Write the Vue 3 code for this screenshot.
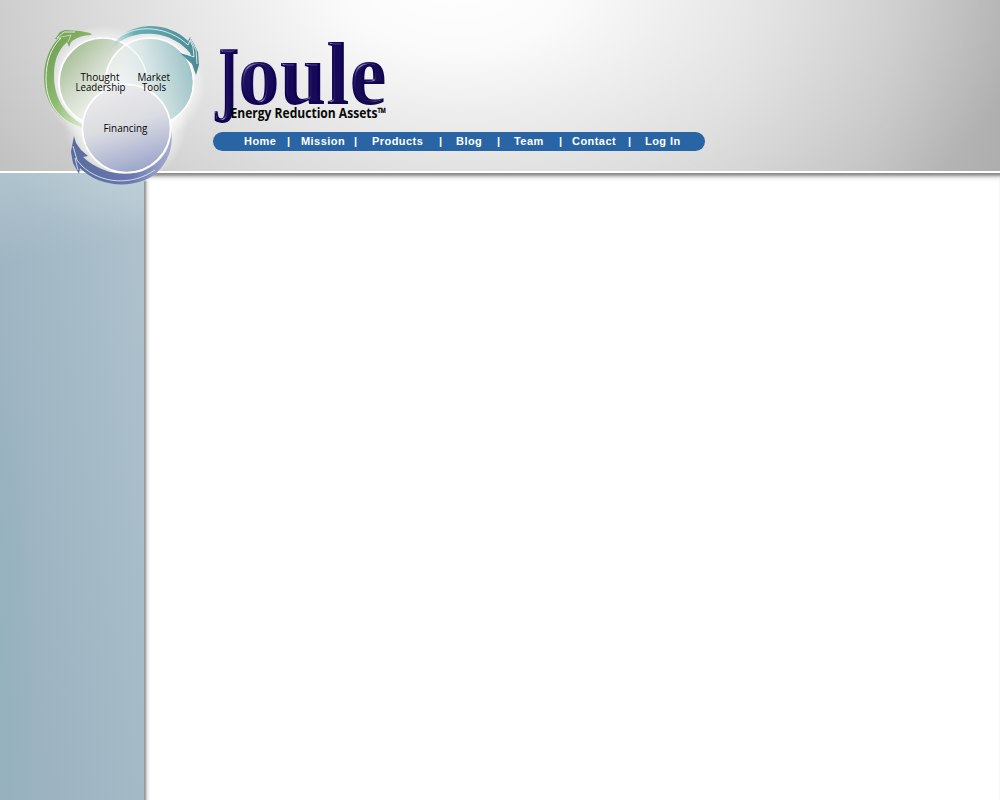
<script setup>
const links = ['Home', 'Mission', 'Products', 'Blog', 'Team', 'Contact', 'Log In']
</script>

<template>
  <div class="page">
    <header class="header">
      <svg class="emblem" width="205" height="195" viewBox="0 0 205 195">
        <defs>
          <radialGradient id="halo"><stop offset=".66" stop-color="#fff" stop-opacity=".8" /><stop offset="1" stop-color="#fff" stop-opacity="0" /></radialGradient>
          <linearGradient id="green" x1=".1" y1=".1" x2=".85" y2=".8"><stop offset="0" stop-color="#a3bd91" /><stop offset=".4" stop-color="#d3dccd" /><stop offset=".75" stop-color="#f5f7f4" /></linearGradient>
          <linearGradient id="teal" x1="1" y1=".35" x2="0" y2=".6"><stop offset="0" stop-color="#9bc3c7" /><stop offset=".5" stop-color="#dae6e6" /><stop offset="1" stop-color="#fafafa" stop-opacity=".45" /></linearGradient>
          <linearGradient id="blue" x1=".35" y1="0" x2=".65" y2="1"><stop offset="0" stop-color="#ebebec" /><stop offset=".45" stop-color="#dcdde2" /><stop offset="1" stop-color="#9aa4ca" /></linearGradient>
          <linearGradient id="greenArc" x1="0" y1="0" x2=".8" y2="1"><stop offset="0" stop-color="#66964b" /><stop offset=".55" stop-color="#8db870" /><stop offset="1" stop-color="#dcebd2" /></linearGradient>
          <linearGradient id="tealArc"><stop offset="0" stop-color="#b9dddf" stop-opacity=".2" /><stop offset=".3" stop-color="#68afb6" /><stop offset="1" stop-color="#4b8a93" /></linearGradient>
          <linearGradient id="blueArc"><stop offset="0" stop-color="#586b9e" /><stop offset=".6" stop-color="#6a78af" /><stop offset="1" stop-color="#a6afd2" /></linearGradient>
        </defs>
        <circle cx="103" cy="84" r="59" fill="url(#halo)" />
        <circle cx="149" cy="84" r="57" fill="url(#halo)" />
        <circle cx="126" cy="122" r="62" fill="url(#halo)" />

        <path d="M82 128 C59 122 44 103 44 78 C44 62 49 48 58 39 L55 39 L60 32 L65 30 L80 31 L90 33 L92 35 C82 35 76 38 71 42 L69 47 L67 42 C57 51 54 62 54 76 C54 97 64 114 82 124 Z" fill="url(#greenArc)" />
        <path d="M80 127 C59 121 46 103 46 79 C46 61 51 48 61 38 L57 38 L64 32 L75 32" fill="none" stroke="#f0f7ec" stroke-width=".9" />
        <path d="M61 37 L71 35 L68 42" fill="none" stroke="#dcead3" stroke-width=".7" />

        <circle cx="103" cy="82" r="44" fill="url(#green)" stroke="#fff" stroke-width="1.7" />
        <circle cx="149.5" cy="82" r="44" fill="url(#teal)" stroke="#fff" stroke-width="1.5" />
        <path d="M112 39 C128 43 144 56 146.500 76" fill="none" stroke="#fff" stroke-width="1.3" opacity=".8" />

        <path d="M107 54 C115 37 129 27 149 26 C166 26 179 32 188 41 L190 37 L194 44 L198 52 L199 65 L196 75 L192 64 L180 53 L191 56 L190 53 C182 43 168 35 154 34 C132 32 118 40 107 54 Z" fill="url(#tealArc)" />
        <path d="M118 38 C138 23 169 27 188 45 L190 40 L193 47 L194 57 L183 53 M190 38 L196 50 L197 64" fill="none" stroke="#e2f2f3" stroke-width=".9" />

        <path d="M74 136 L76 143 L81 150 L88 156 L83 157 C98 171 121 178 143 171 C160 164 171 150 171 131 C175 151 163 173 145 180 C122 189 96 184 80 168 L79 174 L73 163 L71 152 L72 146 Z" fill="url(#blueArc)" />
        <path d="M73 146 L77 160 L82 166 C101 184 132 186 155 170 M75 158 L78 170" fill="none" stroke="#dfe4f1" stroke-width=".9" />
        <circle cx="126.500" cy="128.500" r="44" fill="url(#blue)" stroke="#fff" stroke-width="1.500" />

        <g class="caption">
          <text x="80.500" y="81" textLength="39" lengthAdjust="spacingAndGlyphs">Thought</text>
          <text x="75.500" y="91" textLength="50" lengthAdjust="spacingAndGlyphs">Leadership</text>
          <text x="137.500" y="81" textLength="32.500" lengthAdjust="spacingAndGlyphs">Market</text>
          <text x="142" y="91" textLength="24" lengthAdjust="spacingAndGlyphs">Tools</text>
          <text x="103.500" y="132" textLength="44" lengthAdjust="spacingAndGlyphs">Financing</text>
        </g>
      </svg>

      <div class="brand">
        <svg class="wordmark" width="190" height="95" viewBox="205 35 190 95">
          <defs>
            <linearGradient id="navy" x1="0" y1="0" x2="1" y2="1"><stop offset="0" stop-color="#1f1962" /><stop offset=".45" stop-color="#100052" /><stop offset="1" stop-color="#120a4c" /></linearGradient>
            <filter id="bevel" x="-10%" y="-10%" width="120%" height="120%" color-interpolation-filters="sRGB">
              <feGaussianBlur in="SourceAlpha" stdDeviation="1.2" result="b" />
              <feSpecularLighting in="b" surfaceScale="2.4" specularConstant=".75" specularExponent="18" lighting-color="#b4b4ea" result="s"><feDistantLight azimuth="235" elevation="28" /></feSpecularLighting>
              <feComposite in="s" in2="SourceAlpha" operator="in" result="lit" />
              <feMerge><feMergeNode in="SourceGraphic" /><feMergeNode in="lit" /></feMerge>
            </filter>
          </defs>
          <g class="joule" filter="url(#bevel)">
            <text class="cap" transform="translate(218 106.500) scale(.57 1)" font-size="79">J</text>
            <text x="238" y="104" font-size="89" textLength="148.500" lengthAdjust="spacingAndGlyphs">oule</text>
          </g>
          <text class="tagline" x="230.500" y="118" textLength="147" lengthAdjust="spacingAndGlyphs">Energy Reduction Assets</text>
          <text class="tm" x="377.500" y="118" textLength="8.500" lengthAdjust="spacingAndGlyphs">™</text>
        </svg>
        <nav class="nav">
          <template v-for="(link, i) in links" :key="link">
            <span v-if="i" class="sep">|</span>
            <a>{{ link }}</a>
          </template>
        </nav>
      </div>
    </header>
    <div class="body">
      <aside class="side"></aside>
      <main class="content"></main>
    </div>
  </div>
</template>

<style>
body { margin: 0; overflow: hidden; }
</style>

<style scoped>
.page { width: 1000px; height: 800px; display: flex; flex-direction: column; background: #fff; }
.header {
  position: relative; z-index: 2; height: 171px; flex: none; display: flex;
  border-bottom: 2px solid #fff;
  background:
    radial-gradient(ellipse 580px 340px at 455px -15px, #fff 0%, rgba(255,255,255,.93) 20%, rgba(255,255,255,.5) 58%, rgba(255,255,255,0) 100%),
    linear-gradient(100deg, #bdbdbd 0%, #bebebe 40%, #c4c4c4 72%, #bdbdbd 87%, #aeaeae 100%);
}
.emblem { flex: none; height: 195px; }
.caption { font: 11px "Open Sans", "Noto Sans", sans-serif; fill: #050505; }
.brand { display: flex; flex-direction: column; padding-top: 35px; }
.wordmark { display: block; flex: none; overflow: visible; }
.joule { font-family: "Liberation Serif", serif; font-weight: bold; fill: url(#navy); }
.cap { font-family: "DejaVu Serif", serif; }
.tagline { font: bold 13.500px "Open Sans", "Noto Sans", sans-serif; fill: #080808; }
.tm { font: bold 14px "Open Sans", "Noto Sans", sans-serif; fill: #080808; stroke: #080808; stroke-width: .3px; }
.nav {
  box-sizing: border-box; width: 492px; height: 19px; margin: 2px 0 0 8px; padding-left: 31px;
  display: grid; grid-template-columns: 43px 14px 53px 18px 67px 17px 41px 17px 45px 13px 56px 17px 60px;
  border-radius: 10px; background: #2965a5; color: #fff;
  font: bold 11px/19px "Liberation Sans", Arial, sans-serif; letter-spacing: .45px; white-space: nowrap;
}
.body { flex: 1; display: flex; }
.side {
  width: 144px;
  background:
    linear-gradient(170deg, rgba(190,207,215,.5) 0, rgba(190,207,215,0) 90px),
    radial-gradient(ellipse 130px 60px at 144px 0, rgba(200,217,222,.6), rgba(200,217,222,0)),
    radial-gradient(ellipse 34px 330px at 0 480px, rgba(147,178,190,.8), rgba(147,178,190,0)),
    linear-gradient(81deg, #98b1bd 0%, #9db3c1 22%, #a4bac7 60%, #b0c2ce 100%);
}
.content {
  flex: 1;
  background:
    linear-gradient(180deg, #858585 0, #a0a0a0 2px, #dadada 4px, #f5f5f5 6px, rgba(255,255,255,0) 9px) 0 0 / 100% 9px no-repeat,
    linear-gradient(90deg, #8f8f8f 0, #b4b4b4 2px, #e4e4e4 3px, rgba(255,255,255,0) 6px) 0 0 / 6px 100% no-repeat,
    linear-gradient(#f7f7f7, #f7f7f7) 100% 0 / 1px 100% no-repeat,
    #fff;
}
</style>
